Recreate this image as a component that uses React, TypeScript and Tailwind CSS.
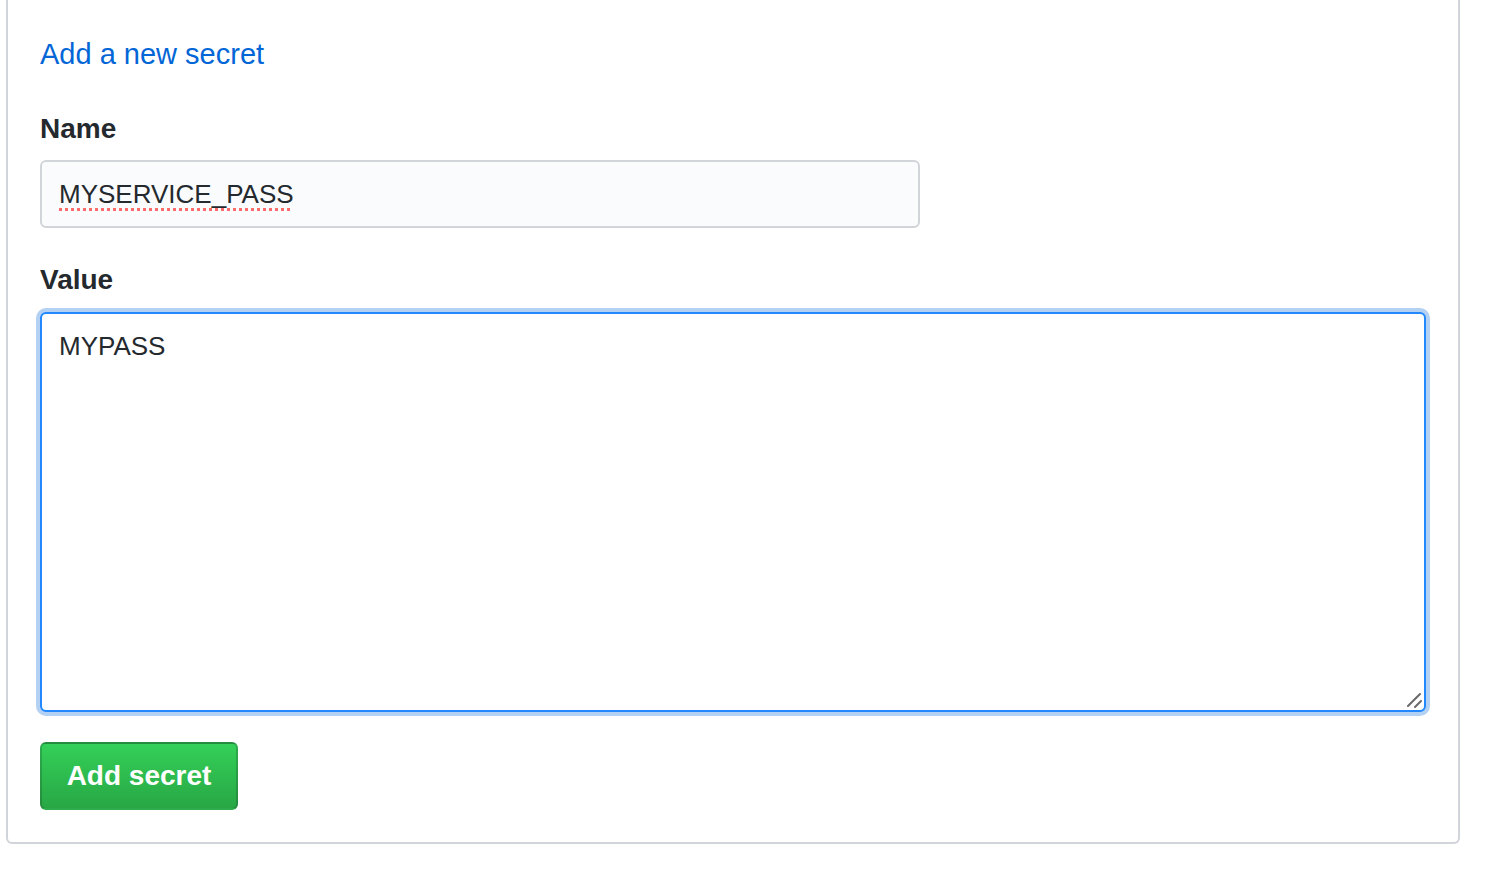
export default function App() {
  return (
    <div className="min-h-[876px] bg-white font-['Liberation_Sans',Arial,sans-serif] text-[#24292e]">
      <div className="ml-[6px] w-[1454px] rounded-b-[6px] border-2 border-t-0 border-[#d1d5da] px-[32px] pb-[32px] pt-[33px]">
        <a href="#" className="block text-[29px] leading-[42px] text-[#0366d6]">
          Add a new secret
        </a>

        <form className="mt-[33px]" onSubmit={(e) => e.preventDefault()}>
          <label className="block text-[28px] font-bold leading-[42px]">Name</label>
          <div className="mt-[10px] flex h-[68px] w-[880px] items-center rounded-[6px] border-2 border-[#d1d5da] bg-[#fafbfc] px-[17px] text-[26px]">
            <span className="underline decoration-[#ff6a6a] decoration-dotted decoration-[3px] underline-offset-[5px]">
              MYSERVICE_PASS
            </span>
          </div>

          <label className="mt-[31px] block text-[28px] font-bold leading-[42px]">Value</label>
          <div className="relative mt-[11px] w-[1386px]">
            <textarea
              defaultValue="MYPASS"
              spellCheck={false}
              className="block h-[400px] w-full resize-none rounded-[6px] border-2 border-[#2188ff] bg-white px-[17px] pt-[14px] text-[26px] leading-[36px] text-[#24292e] shadow-[0_0_0_4px_rgba(3,102,214,0.3)] outline-none"
            />
            {/* resize grip */}
            <svg
              className="pointer-events-none absolute bottom-[4px] right-[4px]"
              width="16"
              height="16"
              viewBox="0 0 16 16"
            >
              <path d="M2 14 L14 2 M9 15 L15 9" stroke="#6a6a6a" strokeWidth="2" strokeLinecap="round" />
            </svg>
          </div>

          <button
            type="submit"
            className="mt-[30px] flex h-[68px] w-[198px] items-center justify-center rounded-[6px] border-2 border-[rgba(27,31,35,0.2)] bg-gradient-to-b from-[#34d058] to-[#28a745] text-[28px] font-bold text-white"
          >
            Add secret
          </button>
        </form>
      </div>
    </div>
  );
}
